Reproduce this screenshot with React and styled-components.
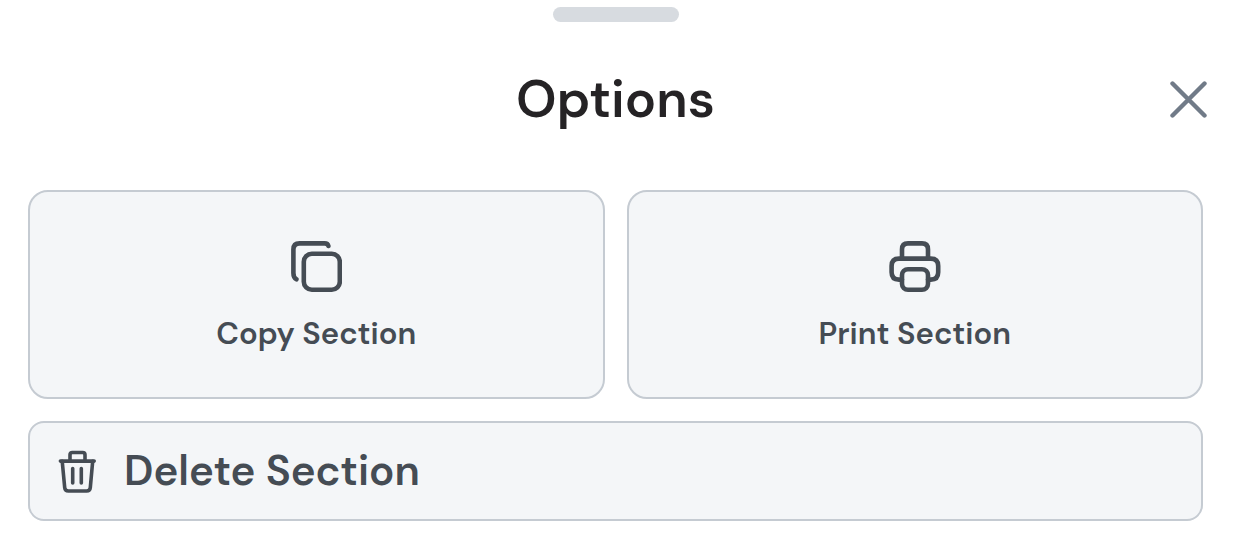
import React from 'react';
import styled, { createGlobalStyle } from 'styled-components';

const GlobalStyle = createGlobalStyle`
    *{
        box-sizing: border-box;
    }

    body{
        margin: 0;
        background: #fff;
        font-family: 'DM Sans', Inter, 'Open Sans', sans-serif;
    }

    button{
        font-family: inherit;
        cursor: pointer;
    }

    svg{
        display: block;
        fill: none;
        stroke: currentColor;
        stroke-linecap: round;
        stroke-linejoin: round;
    }
`;

const SheetStyle = styled.main`
    display: flex;
    flex-direction: column;
    padding: 7px 45px 36px 28px;
`;

const Handle = styled.div`
    align-self: center;
    width: 126px;
    height: 15px;
    border-radius: 8px;
    background: #d7dbe0;
`;

const Header = styled.header`
    display: grid;
    grid-template-columns: 1fr auto 1fr;
    align-items: center;
    height: 154px;
    margin-bottom: 14px;

    h1{
        grid-column: 2;
        margin: 0;
        font-size: 52px;
        line-height: 60px;
        font-weight: 600;
        color: #252325;
    }
`;

const CloseButton = styled.button`
    justify-self: end;
    margin-right: -4px;
    padding: 0;
    border: none;
    background: transparent;
    color: #717b88;
`;

const Actions = styled.div`
    display: grid;
    grid-template-columns: 1fr 1fr;
    gap: 22px;
`;

const ActionButton = styled.button`
    display: flex;
    flex-direction: ${({ $wide }) => ($wide ? 'row' : 'column')};
    grid-column: ${({ $wide }) => ($wide ? '1 / -1' : 'auto')};
    align-items: center;
    gap: ${({ $wide }) => ($wide ? '28px' : '23px')};
    padding: ${({ $wide }) => ($wide ? '24px 28px' : '49px 28px 45px')};
    border: 2px solid #c5cbd2;
    border-radius: ${({ $wide }) => ($wide ? '16px' : '20px')};
    background: #f4f6f8;
    color: #454c54;
    font-size: ${({ $wide }) => ($wide ? '42px' : '31px')};
    line-height: ${({ $wide }) => ($wide ? '48px' : '36px')};
    font-weight: 600;
`;

const CloseIcon = () => (
    <svg width="37" height="37" viewBox="0 0 37 37" strokeWidth="4.4" aria-hidden="true">
        <path d="M2.5 2.5l32 32M34.5 2.5l-32 32" />
    </svg>
);

const CopyIcon = () => (
    <svg width="52" height="52" viewBox="0 0 52 52" strokeWidth="4.6" aria-hidden="true">
        <path d="M38.4 5C37.9 3.1 36.7 2.4 34.7 2.4H9.6Q3.4 2.4 3.4 8.5V32C3.4 35.3 4.4 37.2 6.4 38.3" />
        <rect x="13.8" y="12.8" width="36" height="36" rx="8" />
    </svg>
);

const PrintIcon = () => (
    <svg width="52" height="52" viewBox="0 0 52 52" strokeWidth="4.6" aria-hidden="true">
        <path d="M13 17.6V8.4Q13 2.4 19 2.4H33Q39 2.4 39 8.4V17.6" />
        <path d="M13 38.6H10Q2.6 38.6 2.6 31.2V25Q2.6 17.6 10 17.6H41.8Q49.2 17.6 49.2 25V31.2Q49.2 38.6 41.8 38.6H39" />
        <rect x="13" y="28.2" width="26" height="20.6" rx="6" />
    </svg>
);

const TrashIcon = () => (
    <svg width="38" height="43" viewBox="0 0 38 43" strokeWidth="3.6" aria-hidden="true">
        <path d="M2.4 11.1H36.2M12 11V4.8Q12 2.5 14.3 2.5H24.7Q27 2.5 27 4.8V11" />
        <path d="M4.2 11.2L6.7 37.6Q7 41 10.4 41H28.6Q32 41 32.3 37.6L34.7 11.2" />
        <path d="M14.7 18.5V33M23.3 18.5V33" />
    </svg>
);

function App() {
    return (
        <>
            <GlobalStyle />
            <SheetStyle>
                <Handle />
                <Header>
                    <h1>Options</h1>
                    <CloseButton type="button" aria-label="Close">
                        <CloseIcon />
                    </CloseButton>
                </Header>
                <Actions>
                    <ActionButton type="button">
                        <CopyIcon />
                        Copy Section
                    </ActionButton>
                    <ActionButton type="button">
                        <PrintIcon />
                        Print Section
                    </ActionButton>
                    <ActionButton type="button" $wide>
                        <TrashIcon />
                        Delete Section
                    </ActionButton>
                </Actions>
            </SheetStyle>
        </>
    );
}

export default App;
